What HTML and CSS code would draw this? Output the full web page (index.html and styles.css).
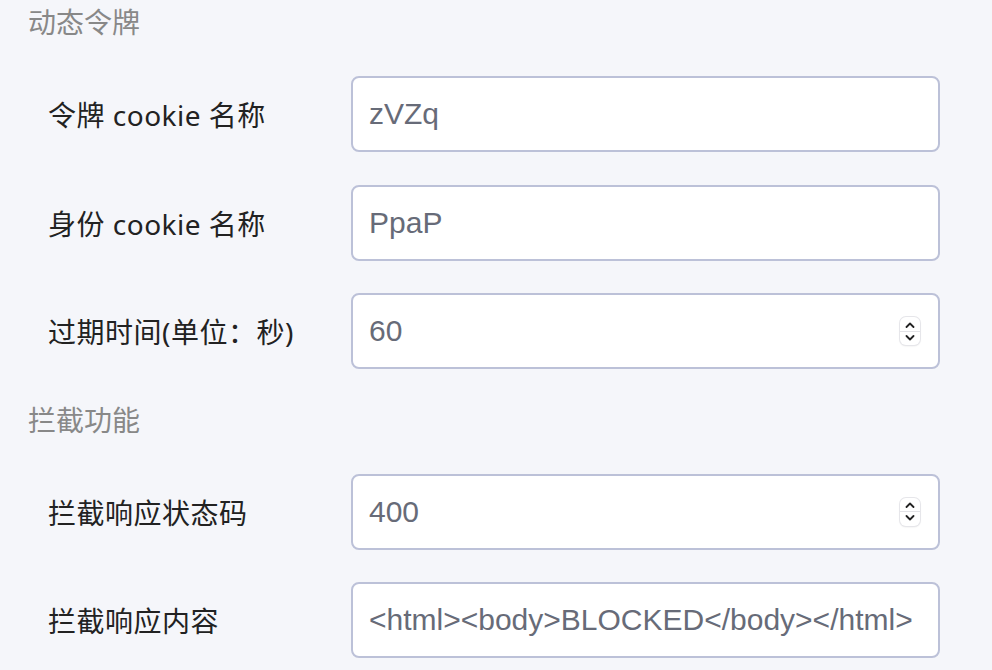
FILE: index.html
```html
<!DOCTYPE html>
<html lang="zh-CN">
<head>
    <meta charset="UTF-8">
    <meta name="viewport" content="width=device-width, initial-scale=1.0">
    <title>动态令牌设置</title>
    <link rel="stylesheet" href="styles.css">
</head>
<body>
    <div class="panel">
        <div class="section-title">动态令牌</div>

        <div class="form-row">
            <label class="form-label">令牌 cookie 名称</label>
            <div class="field"><span class="field-text">zVZq</span></div>
        </div>

        <div class="form-row">
            <label class="form-label">身份 cookie 名称</label>
            <div class="field"><span class="field-text">PpaP</span></div>
        </div>

        <div class="form-row">
            <label class="form-label">过期时间(单位：秒)</label>
            <div class="field">
                <span class="field-text">60</span>
                <span class="spinner">
                    <svg class="chev" viewBox="0 0 10 6" width="10" height="6"><path d="M1.5 5 L5 1.5 L8.5 5" /></svg>
                    <span class="spinner-line"></span>
                    <svg class="chev" viewBox="0 0 10 6" width="10" height="6"><path d="M1.5 1 L5 4.5 L8.5 1" /></svg>
                </span>
            </div>
        </div>

        <div class="section-title">拦截功能</div>

        <div class="form-row">
            <label class="form-label">拦截响应状态码</label>
            <div class="field">
                <span class="field-text">400</span>
                <span class="spinner">
                    <svg class="chev" viewBox="0 0 10 6" width="10" height="6"><path d="M1.5 5 L5 1.5 L8.5 5" /></svg>
                    <span class="spinner-line"></span>
                    <svg class="chev" viewBox="0 0 10 6" width="10" height="6"><path d="M1.5 1 L5 4.5 L8.5 1" /></svg>
                </span>
            </div>
        </div>

        <div class="form-row">
            <label class="form-label">拦截响应内容</label>
            <div class="field"><span class="field-text">&lt;html&gt;&lt;body&gt;BLOCKED&lt;/body&gt;&lt;/html&gt;</span></div>
        </div>
    </div>
</body>
</html>
```

FILE: styles.css
```css
body {
    margin: 0;
    background-color: #f5f6fa;
    font-family: "Liberation Sans", "Noto Sans CJK SC", sans-serif;
}
.panel {
    padding-top: 4px;
}
.section-title {
    padding-left: 28px;
    font-size: 28px;
    line-height: 40px;
    color: #888888;
    margin-bottom: 32px;
}
.form-row {
    display: grid;
    grid-template-columns: 303px 589px;
    align-items: center;
    padding-left: 48px;
    margin-bottom: 32.5px;
}
.form-label {
    font-family: "Noto Sans", "Noto Sans CJK SC", sans-serif;
    font-size: 28px;
    letter-spacing: 0.5px;
    color: #222222;
}
.field {
    display: flex;
    align-items: center;
    box-sizing: border-box;
    height: 76px;
    padding: 0 18px 0 16px;
    background: #ffffff;
    border: 2px solid #bcc1d8;
    border-radius: 8px;
}
.field-text {
    flex: 1;
    font-size: 30px;
    color: #676b78;
    white-space: nowrap;
}
.spinner {
    display: flex;
    flex-direction: column;
    align-items: center;
    justify-content: space-around;
    box-sizing: border-box;
    width: 20px;
    height: 28px;
    padding: 3px 0;
    background: #ffffff;
    border-radius: 6px;
    box-shadow: 0 0 0 1px #e6e6ea, 0 1px 2px rgba(0,0,0,0.12);
}
.spinner-line {
    width: 100%;
    height: 1px;
    background: #e2e2e6;
}
.chev {
    display: block;
    fill: none;
    stroke: #222222;
    stroke-width: 1.8;
    stroke-linecap: round;
    stroke-linejoin: round;
}
```
